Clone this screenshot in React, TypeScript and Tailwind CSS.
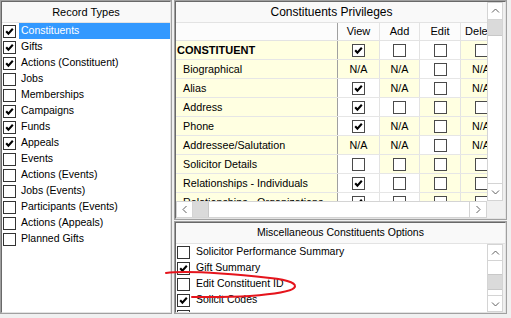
import React from "react";

const recordTypes: [string, boolean][] = [
  ["Constituents", true],
  ["Gifts", true],
  ["Actions (Constituent)", true],
  ["Jobs", false],
  ["Memberships", false],
  ["Campaigns", true],
  ["Funds", true],
  ["Appeals", true],
  ["Events", false],
  ["Actions (Events)", false],
  ["Jobs (Events)", false],
  ["Participants (Events)", false],
  ["Actions (Appeals)", false],
  ["Planned Gifts", false],
];

type Cell = boolean | "na";

// bg: one letter per column, y = yellow, w = white
const privileges: { name: string; bold?: boolean; cells: Cell[]; bg: string }[] = [
  { name: "CONSTITUENT", bold: true, cells: [true, false, false, false], bg: "ywwy" },
  { name: "Biographical", cells: ["na", "na", false, "na"], bg: "yywy" },
  { name: "Alias", cells: [true, "na", false, "na"], bg: "wywy" },
  { name: "Address", cells: [true, false, false, false], bg: "wwyy" },
  { name: "Phone", cells: [true, "na", false, "na"], bg: "wyyy" },
  { name: "Addressee/Salutation", cells: ["na", "na", false, "na"], bg: "yywy" },
  { name: "Solicitor Details", cells: [false, false, false, false], bg: "wyyy" },
  { name: "Relationships - Individuals", cells: [true, false, false, false], bg: "wwyy" },
  { name: "Relationships - Organizations", cells: [true, false, false, false], bg: "wwyy" },
];

const columns = [
  { label: "View", w: "w-[42px]" },
  { label: "Add", w: "w-[40px]" },
  { label: "Edit", w: "w-[41px]" },
  { label: "Delete", w: "w-[41px]" },
];

const miscOptions: [string, boolean][] = [
  ["Solicitor Performance Summary", false],
  ["Gift Summary", true],
  ["Edit Constituent ID", false],
  ["Solicit Codes", true],
  ["", false],
];

function Check({ on, grid }: { on: boolean; grid?: boolean }) {
  return (
    <span
      className={`flex h-[13px] w-[13px] shrink-0 items-center justify-center border bg-white ${
        grid ? "border-[#4a4a4a]" : "border-[#333]"
      }`}
    >
      {on && (
        <svg width="11" height="11" viewBox="0 0 11 11">
          <path d="M2.2 5.2L4.4 7.6L8.8 2.8" fill="none" stroke="#000" strokeWidth="2.1" />
        </svg>
      )}
    </span>
  );
}

function Arrow({ dir }: { dir: "up" | "down" | "left" | "right" }) {
  if (dir === "up" || dir === "down") {
    return (
      <svg width="9" height="6" viewBox="0 0 9 6">
        <path
          d={dir === "up" ? "M1 4.5L4.5 1L8 4.5" : "M1 1.5L4.5 5L8 1.5"}
          fill="none"
          stroke="#606060"
          strokeWidth="1"
        />
      </svg>
    );
  }
  return (
    <svg width="6" height="9" viewBox="0 0 6 9">
      <path
        d={dir === "left" ? "M4.5 1L1 4.5L4.5 8" : "M1.5 1L5 4.5L1.5 8"}
        fill="none"
        stroke="#606060"
        strokeWidth="1"
      />
    </svg>
  );
}

function Panel({ className, children }: { className: string; children: React.ReactNode }) {
  return (
    <div className={`border border-[#a0a0a0] ${className}`}>
      <div className="h-full overflow-hidden border border-t-[#696969] border-l-[#696969] border-r-[#e3e3e3] border-b-[#e3e3e3] bg-white">
        {children}
      </div>
    </div>
  );
}

export default function App() {
  return (
    <div className="relative flex h-[318px] w-[511px] gap-[2px] overflow-hidden bg-[#f0f0f0] font-['Liberation_Sans',Arial,sans-serif] text-black">
      {/* Record types */}
      <Panel className="h-[314px] w-[172px] shrink-0">
        <div className="flex h-[21px] items-center justify-center border-b border-[#e3e3e3] bg-[#f9f9f9] text-[11px]">
          Record Types
        </div>
        <div className="flex flex-col">
          {recordTypes.map(([label, on], i) => (
            <div key={label} className="flex h-[16px] items-center">
              <span className="ml-[1px]">
                <Check on={on} />
              </span>
              <span
                className={`ml-[3px] flex h-[16px] flex-1 items-center pl-[2px] text-[10.5px] ${
                  i === 0 ? "bg-[#3399ff] text-white" : ""
                }`}
              >
                {label}
              </span>
            </div>
          ))}
        </div>
      </Panel>

      <div className="flex w-[333px] shrink-0 flex-col gap-[1px]">
        {/* Privileges grid */}
        <Panel className="h-[220px]">
          <div className="flex h-full">
            <div className="flex w-[311px] shrink-0 flex-col">
              <div className="flex h-[20px] shrink-0 items-center justify-center bg-[#f9f9f9] text-[12px]">
                Constituents Privileges
              </div>
              <div className="h-[179px] shrink-0 overflow-hidden">
                <div className="flex h-[19px] w-[326px] border-y border-[#e3e3e3] bg-[#fcfcfc] text-[11px]">
                  <div className="w-[162px] shrink-0 border-r border-[#a0a0a0]" />
                  {columns.map((c) => (
                    <div
                      key={c.label}
                      className={`${c.w} flex shrink-0 items-center justify-center border-r border-[#e3e3e3]`}
                    >
                      {c.label}
                    </div>
                  ))}
                </div>
                {privileges.map((r) => (
                  <div key={r.name} className="flex h-[19px] w-[326px] border-b border-[#e6e6e6] text-[10.75px]">
                    <div
                      className={`flex w-[162px] shrink-0 items-center whitespace-nowrap border-r border-[#a0a0a0] bg-[#ffffe1] ${
                        r.bold ? "pl-[1px] text-[11px] font-bold" : "pl-[7px]"
                      }`}
                    >
                      {r.name}
                    </div>
                    {r.cells.map((cell, j) => (
                      <div
                        key={j}
                        className={`${columns[j].w} flex shrink-0 items-center justify-center border-r border-[#e3e3e3] ${
                          r.bg[j] === "y" ? "bg-[#ffffe1]" : "bg-white"
                        }`}
                      >
                        {cell === "na" ? "N/A" : <Check on={cell} grid />}
                      </div>
                    ))}
                  </div>
                ))}
              </div>
              <div className="flex h-[17px] shrink-0 border border-[#d4d4d4] bg-white">
                <div className="flex w-[16px] items-center justify-center border-r border-[#d4d4d4]">
                  <Arrow dir="left" />
                </div>
                <div className="w-[16px] border-r border-[#c8c8c8] bg-[#dadada]" />
                <div className="flex-1" />
                <div className="flex w-[17px] items-center justify-center border-l border-[#d4d4d4]">
                  <Arrow dir="right" />
                </div>
              </div>
            </div>
            <div className="flex w-[16px] shrink-0 flex-col">
              <div className="flex h-[199px] flex-col border border-[#d4d4d4] bg-white">
                <div className="flex h-[17px] shrink-0 items-center justify-center border-b border-[#d4d4d4]">
                  <Arrow dir="up" />
                </div>
                <div className="h-[16px] shrink-0 border-b border-[#c8c8c8] bg-[#dadada]" />
                <div className="flex-1" />
                <div className="flex h-[17px] shrink-0 items-center justify-center border-t border-[#d4d4d4]">
                  <Arrow dir="down" />
                </div>
              </div>
              <div className="flex-1 bg-[#f0f0f0]" />
            </div>
            <div className="w-[2px] shrink-0 bg-[#f0f0f0]" />
          </div>
        </Panel>

        {/* Misc options */}
        <Panel className="h-[93px]">
          <div className="flex h-[21px] items-center justify-center border-b border-[#e3e3e3] bg-[#f9f9f9] text-[10.5px]">
            Miscellaneous Constituents Options
          </div>
          <div className="flex h-[68px]">
            <div className="flex w-[311px] shrink-0 flex-col overflow-hidden">
              {miscOptions.map(([label, on], i) => (
                <div key={i} className="flex h-[16px] shrink-0 items-center">
                  <span className="ml-[1px]">
                    <Check on={on} />
                  </span>
                  <span className="ml-[4px] pl-[2px] text-[10.5px]">{label}</span>
                </div>
              ))}
            </div>
            <div className="flex w-[16px] shrink-0 flex-col border border-[#d4d4d4] bg-white">
              <div className="flex h-[16px] shrink-0 items-center justify-center border-b border-[#d4d4d4]">
                <Arrow dir="up" />
              </div>
              <div className="h-[13px] shrink-0" />
              <div className="h-[16px] shrink-0 border-y border-[#c8c8c8] bg-[#dadada]" />
              <div className="flex-1" />
              <div className="flex h-[16px] shrink-0 items-center justify-center border-t border-[#d4d4d4]">
                <Arrow dir="down" />
              </div>
            </div>
            <div className="w-[2px] shrink-0 bg-[#f0f0f0]" />
          </div>
        </Panel>
      </div>

      {/* hand-drawn annotation */}
      <svg className="pointer-events-none absolute left-0 top-0" width="511" height="318" viewBox="0 0 511 318">
        <path
          d="M166 273 C 190 270, 232 274, 270 278 C 290 280, 298 284, 294 288 C 290 292, 275 294, 250 296 C 225 297.5, 205 297, 192 297"
          fill="none"
          stroke="#e5141c"
          strokeWidth="2"
          strokeLinecap="round"
        />
      </svg>
    </div>
  );
}
